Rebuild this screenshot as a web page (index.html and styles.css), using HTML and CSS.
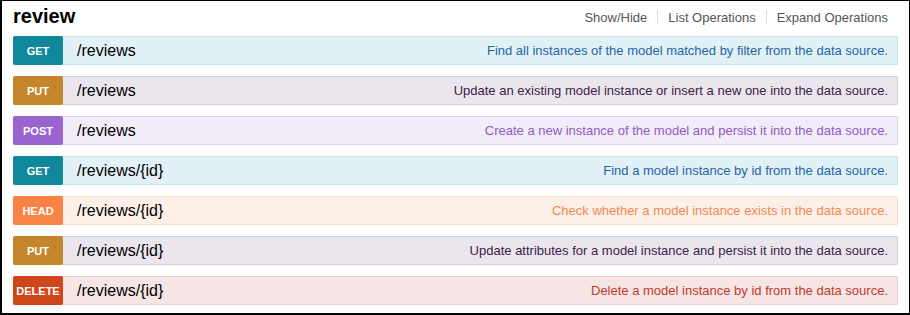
FILE: index.html
```
<!DOCTYPE html>
<html>
<head>
<meta charset="utf-8">
<link rel="stylesheet" href="styles.css">
</head>
<body>
<div class="frame">
  <div class="header">
    <h2 class="title">review</h2>
    <ul class="links">
      <li>Show/Hide</li>
      <li>List Operations</li>
      <li>Expand Operations</li>
    </ul>
  </div>
  <ul class="ops">
    <li class="op get"><span class="verb">GET</span><span class="path">/reviews</span><span class="desc">Find all instances of the model matched by filter from the data source.</span></li>
    <li class="op put"><span class="verb">PUT</span><span class="path">/reviews</span><span class="desc">Update an existing model instance or insert a new one into the data source.</span></li>
    <li class="op post"><span class="verb">POST</span><span class="path">/reviews</span><span class="desc">Create a new instance of the model and persist it into the data source.</span></li>
    <li class="op get"><span class="verb">GET</span><span class="path">/reviews/{id}</span><span class="desc">Find a model instance by id from the data source.</span></li>
    <li class="op head"><span class="verb">HEAD</span><span class="path">/reviews/{id}</span><span class="desc">Check whether a model instance exists in the data source.</span></li>
    <li class="op put"><span class="verb">PUT</span><span class="path">/reviews/{id}</span><span class="desc">Update attributes for a model instance and persist it into the data source.</span></li>
    <li class="op delete"><span class="verb">DELETE</span><span class="path">/reviews/{id}</span><span class="desc">Delete a model instance by id from the data source.</span></li>
  </ul>
</div>
</body>
</html>
```
FILE: styles.css
```
* { box-sizing: border-box; }
html, body { margin: 0; padding: 0; background: #fff; }
body { font-family: "Liberation Sans", Arial, Helvetica, sans-serif; }
.frame {
  width: 910px;
  height: 315px;
  border: 1px solid #000;
  border-left-width: 2px;
  border-bottom-width: 2px;
  padding: 0 11px 0 11px;
}
.header {
  display: flex;
  align-items: center;
  justify-content: space-between;
  height: 35px;
}
.title {
  margin: 0;
  font-size: 20px;
  font-weight: bold;
  color: #000;
  position: relative;
  top: -2px;
}
.links {
  list-style: none;
  margin: 0;
  padding: 0;
  display: flex;
  font-size: 13px;
  color: #555;
  position: relative;
  top: -1px;
}
.links li {
  padding: 0 10px;
  border-left: 1px solid #ddd;
  line-height: 15px;
}
.links li:first-child { border-left: none; }
.links li:last-child { padding-right: 10px; }
.ops { list-style: none; margin: 0; padding: 0; }
.op {
  display: flex;
  align-items: center;
  height: 29px;
  margin-bottom: 11px;
  border: 1px solid;
  border-radius: 1px;
}
.verb {
  width: 50px;
  height: 29px;
  margin: -1px 0 -1px -1px;
  border-radius: 2px;
  color: #fff;
  font-size: 11px;
  font-weight: bold;
  display: flex;
  align-items: center;
  justify-content: center;
  flex: none;
}
.path {
  padding-left: 14px;
  font-size: 16px;
  color: #000;
  flex: none;
}
.desc {
  margin-left: auto;
  padding-right: 9px;
  font-size: 13px;
}
.get { background: #e2f1f6; border-color: #c6e2ea; }
.get .verb { background: #10879b; }
.get .desc { color: #2664a8; }
.put { background: #ebe6ee; border-color: #d6d0db; }
.put .verb { background: #c5862b; }
.put .desc { color: #3b2349; }
.post { background: #f2ecf9; border-color: #ddd1ee; }
.post .verb { background: #9a64cf; }
.post .desc { color: #8f5cc4; }
.head { background: #fdf0e9; border-color: #f6ddd0; }
.head .verb { background: #fb8245; }
.head .desc { color: #ee8a50; }
.delete { background: #f5e6e5; border-color: #e8d0ce; }
.delete .verb { background: #d0461b; }
.delete .desc { color: #c13a2c; }
```
